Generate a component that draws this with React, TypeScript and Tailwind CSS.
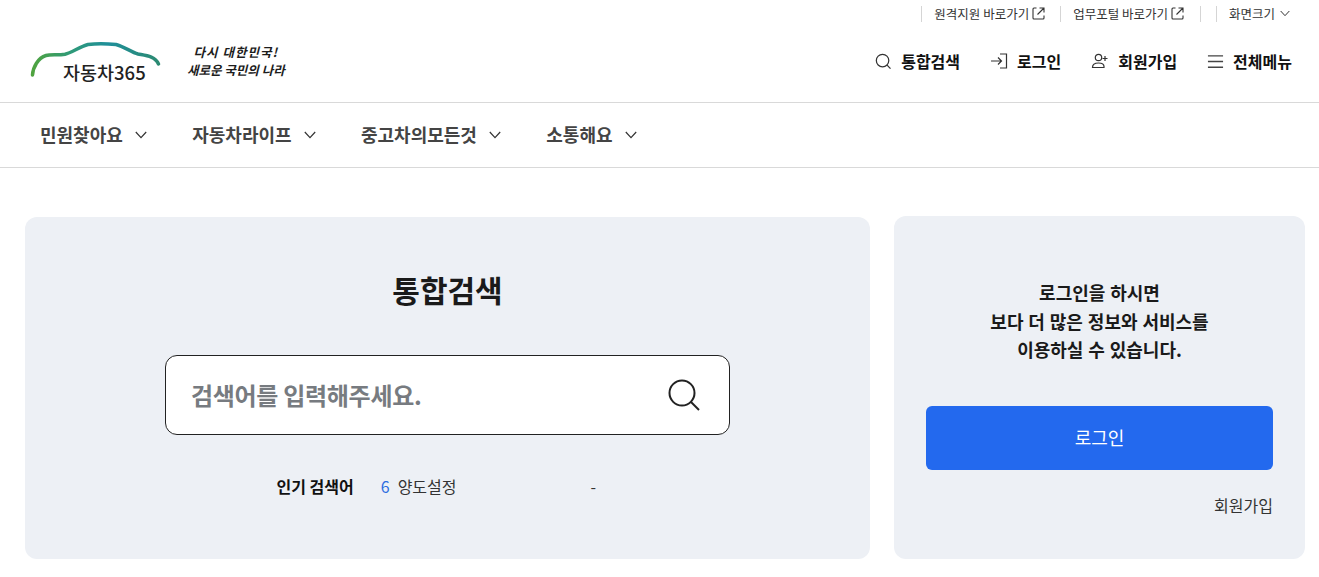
import React from "react";

const Chevron = ({ className = "" }: { className?: string }) => (
  <svg viewBox="0 0 12 8" fill="none" className={className} stroke="currentColor" strokeWidth="1.200">
    <path d="M.8 1 6 6.600 11.200 1" />
  </svg>
);

const ExternalIcon = () => (
  <svg viewBox="0 0 13 13" fill="none" stroke="#333" strokeWidth="1.100" className="w-[13px] h-[13px] ml-[3px]">
    <path d="M4.500 1H2a1 1 0 0 0-1 1v9a1 1 0 0 0 1 1h9a1 1 0 0 0 1-1V8.500M7.500 1H12v4.500M12 1 5.500 7.500" />
  </svg>
);

const Sep = () => <span className="w-px h-[16px] bg-[#d5d5d5]" />;

const Logo = () => (
  <div className="flex items-center w-[256px] h-[44px] shrink-0">
    <div className="relative w-[131px] h-[44px] shrink-0">
      <svg viewBox="0 0 131 44" className="absolute left-0 top-0 w-[131px] h-[44px]" fill="none">
        <defs>
          <linearGradient id="car" x1="0" x2="1" y1="0" y2="0">
            <stop offset="0" stopColor="#4fa33f" />
            <stop offset="0.3" stopColor="#2f9a78" />
            <stop offset="0.6" stopColor="#1f8f9a" />
            <stop offset="1" stopColor="#2c8a72" />
          </linearGradient>
        </defs>
        <path
          d="M2.500 36C3 28 8 19 16 16.500c5-1.300 12 0 19-1.200C42 13.500 50 7.500 58 5.500c6-.8 20-.8 28 0 8 2 15 7.500 22 9.500 8 1.500 17 2 20.500 10"
          stroke="url(#car)"
          strokeWidth="3.500"
          strokeLinecap="round"
        />
      </svg>
      <span className="absolute left-[33px] top-[21px] text-[18.500px] leading-[24px] font-medium text-[#222] whitespace-nowrap">
        자동차365
      </span>
    </div>
    <div className="ml-[26px] flex flex-col items-center text-[#1d1d1d] font-bold text-[12.500px] leading-[18px] italic whitespace-nowrap">
      <span className="tracking-[1px]">다시 대한민국!</span>
      <span>새로운 국민의 나라</span>
    </div>
  </div>
);

const HeaderAction = ({ icon, label }: { icon: React.ReactNode; label: string }) => (
  <a className="flex items-center gap-[9px] text-[16px] font-bold text-[#111] leading-[24px]">
    {icon}
    <span>{label}</span>
  </a>
);

const NavItem = ({ label }: { label: string }) => (
  <a className="flex items-center gap-[12px] text-[18px] font-semibold text-[#444] leading-[24px]">
    <span>{label}</span>
    <Chevron className="w-[12px] h-[8px] text-[#333] mt-[2px]" />
  </a>
);

export default function App() {
  return (
    <div className="w-[1319px] h-[577px] overflow-hidden bg-white font-['Noto_Sans_CJK_KR','Noto_Sans',sans-serif] text-[#111]">
      <header className="h-[103px] border-b border-[#d9d9d9] pl-[30px] pr-[27px]">
        <div className="h-[28px] flex items-center justify-end pr-[2px] text-[12.500px] text-[#333] leading-[16px]">
          <Sep />
          <a className="flex items-center ml-[12px] mr-[15px] -mt-[1px]">
            원격지원 바로가기
            <ExternalIcon />
          </a>
          <Sep />
          <a className="flex items-center ml-[12px] mr-[16px] -mt-[1px]">
            업무포털 바로가기
            <ExternalIcon />
          </a>
          <Sep />
          <span className="w-[15px]" />
          <Sep />
          <a className="flex items-center ml-[12px] -mt-[1px]">
            화면크기
            <Chevron className="w-[10px] h-[7px] ml-[5px] text-[#333]" />
          </a>
        </div>
        <div className="flex items-center justify-between h-[66px]">
          <Logo />
          <div className="flex items-center gap-[30px]">
            <HeaderAction
              label="통합검색"
              icon={
                <svg viewBox="0 0 18 18" fill="none" stroke="#333" strokeWidth="1.300" className="w-[17px] h-[17px]">
                  <circle cx="8" cy="8" r="6.600" />
                  <path d="m12.800 12.800 3.600 3.800" />
                </svg>
              }
            />
            <HeaderAction
              label="로그인"
              icon={
                <svg viewBox="0 0 18 18" fill="none" stroke="#333" strokeWidth="1.200" className="w-[18px] h-[18px]">
                  <path d="M10 2h6.500v14H10M1 9h10.500M8 5.500 11.500 9 8 12.500" />
                </svg>
              }
            />
            <HeaderAction
              label="회원가입"
              icon={
                <svg viewBox="0 0 18 18" fill="none" stroke="#333" strokeWidth="1.200" className="w-[18px] h-[18px]">
                  <circle cx="7.500" cy="5.500" r="3.200" />
                  <path d="M1.500 15.500c0-3 2.500-4.500 6-4.500s5.500 1.500 5.500 3.500v1zM14 4v5M11.500 6.500h5" />
                </svg>
              }
            />
            <HeaderAction
              label="전체메뉴"
              icon={
                <svg viewBox="0 0 18 18" fill="none" stroke="#444" strokeWidth="1.500" className="w-[17px] h-[17px]">
                  <path d="M1 3h16M1 9h16M1 15h16" />
                </svg>
              }
            />
          </div>
        </div>
      </header>

      <nav className="h-[65px] border-b border-[#d9d9d9] flex items-center pl-[40px] pb-[2px] gap-[45.400px]">
        <NavItem label="민원찾아요" />
        <NavItem label="자동차라이프" />
        <NavItem label="중고차의모든것" />
        <NavItem label="소통해요" />
      </nav>

      <main className="flex gap-[24px] pl-[25px] pr-[14px] pt-[49px]">
        <section className="w-[845px] h-[342px] bg-[#edf0f5] rounded-[12px] flex flex-col items-center pt-[48px]">
          <h1 className="text-[30px] leading-[48px] font-bold text-[#1a1a1a]">통합검색</h1>
          <div className="mt-[42px] w-[565px] h-[80px] bg-white border border-[#222] rounded-[12px] flex items-center justify-between pl-[25px] pr-[29px]">
            <span className="text-[24px] font-semibold text-[#777b80] tracking-[-0.300px] -mt-[1px]">검색어를 입력해주세요.</span>
            <svg viewBox="0 0 32 32" fill="none" stroke="#222" strokeWidth="2" className="w-[32px] h-[32px] -mt-[1px]">
              <circle cx="14" cy="14" r="12.500" />
              <path d="m23 23 8 8" />
            </svg>
          </div>
          <div className="mt-[39px] flex items-center w-[340px] ml-[-2px] text-[16px] leading-[24px]">
            <span className="font-bold text-[#111]">인기 검색어</span>
            <span className="ml-[27px] text-[#2d6de0]">6</span>
            <span className="ml-[8px] text-[#333]">양도설정</span>
            <span className="ml-[134px] text-[#333]">-</span>
          </div>
        </section>

        <aside className="w-[411px] h-[343px] -mt-px bg-[#edf0f5] rounded-[12px] flex flex-col px-[32px] pt-[62px]">
          <p className="text-center text-[18px] leading-[28.500px] font-semibold text-[#1a1a1a] [word-spacing:0.800px]">
            로그인을 하시면
            <br />
            보다 더 많은 정보와 서비스를
            <br />
            이용하실 수 있습니다.
          </p>
          <button className="mt-[42px] h-[64px] w-full bg-[#2369ee] rounded-[6px] text-white text-[18px]">로그인</button>
          <a className="mt-[23px] text-right text-[16px] leading-[24px] text-[#333]">회원가입</a>
        </aside>
      </main>
    </div>
  );
}
